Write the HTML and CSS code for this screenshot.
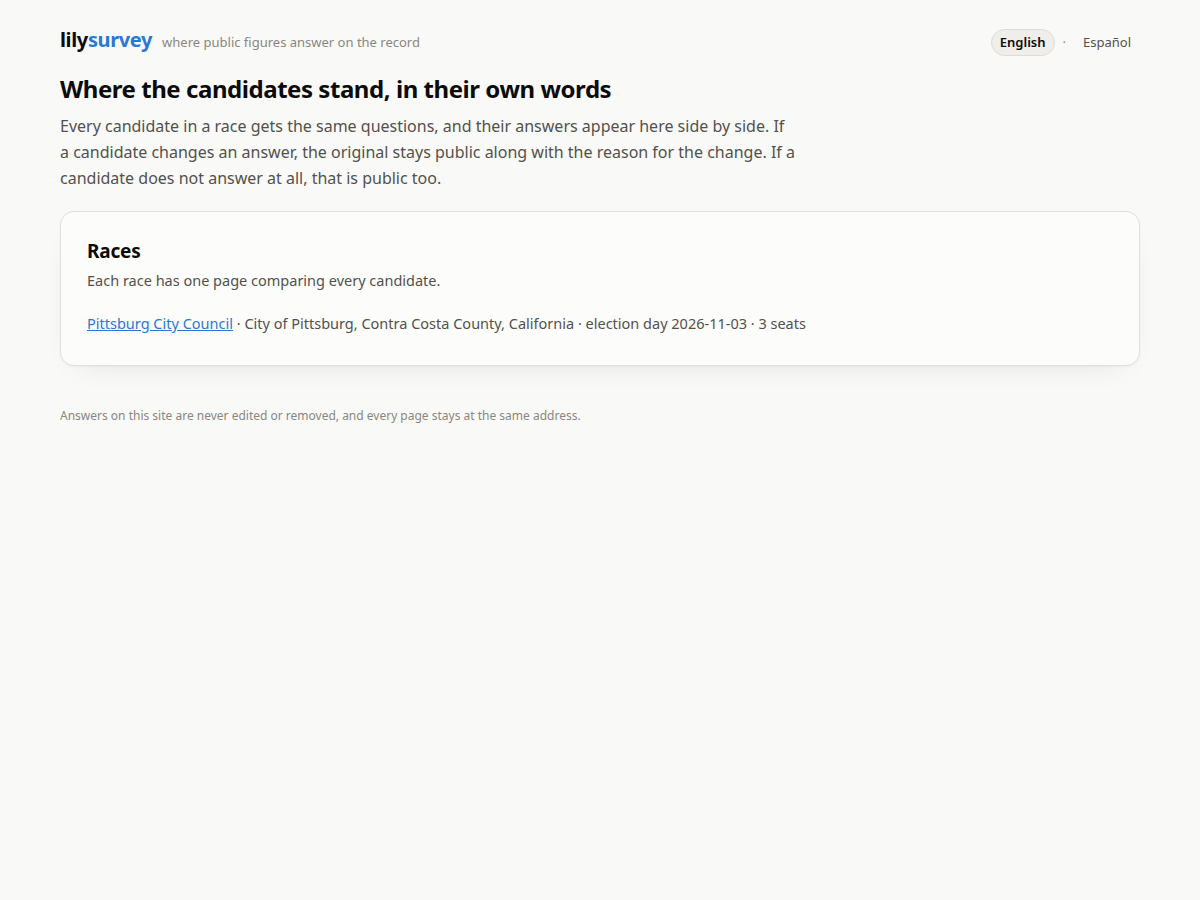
FILE: index.html
```html
<!DOCTYPE html>
<html lang="en">
<head>
    <meta charset="UTF-8">
    <meta name="viewport" content="width=device-width, initial-scale=1.0">
    <title>lilysurvey</title>
    <link rel="stylesheet" href="styles.css">
</head>
<body>
    <div class="wrap">
        <header class="top">
            <div class="brand">
                <a class="logo" href="#">lily<span>survey</span></a>
                <span class="tagline">where public figures answer on the record</span>
            </div>
            <nav class="lang">
                <a class="on" href="#">English</a>
                <span class="dot">·</span>
                <a href="#">Español</a>
            </nav>
        </header>

        <h1>Where the candidates stand, in their own words</h1>
        <p class="lede">Every candidate in a race gets the same questions, and their answers appear here side by side. If a candidate changes an answer, the original stays public along with the reason for the change. If a candidate does not answer at all, that is public too.</p>

        <section class="card">
            <h2>Races</h2>
            <p class="sub">Each race has one page comparing every candidate.</p>
            <p class="race"><a href="#">Pittsburg City Council</a> · City of Pittsburg, Contra Costa County, California · election day 2026-11-03 · 3 seats</p>
        </section>

        <footer>Answers on this site are never edited or removed, and every page stays at the same address.</footer>
    </div>
</body>
</html>
```
FILE: styles.css
```css
* {
    box-sizing: border-box;
}
body {
    margin: 0;
    background: #f9f9f7;
    color: #0b0b0b;
    font-family: "Noto Sans", sans-serif;
    font-size: 16px;
    line-height: 1.6;
}
h1, h2, p {
    margin: 0;
}
.wrap {
    width: 1080px;
    margin: 0 auto;
    padding-top: 24px;
}

/* header */
.top {
    display: flex;
    justify-content: space-between;
    align-items: baseline;
}
.brand {
    display: flex;
    align-items: baseline;
    gap: 10px;
}
.logo {
    font-size: 20px;
    font-weight: 700;
    letter-spacing: -0.36px;
    color: #0b0b0b;
    text-decoration: none;
}
.logo span {
    color: #2a78d6;
}
.tagline {
    font-size: 13px;
    color: #898781;
}
.lang {
    display: flex;
    align-items: baseline;
    font-size: 13px;
}
.lang a {
    padding: 2px 8px;
    border: 1px solid transparent;
    border-radius: 999px;
    color: #52514e;
    text-decoration: none;
}
.lang a.on {
    background: #f0eeeb;
    border-color: #dddcd8;
    color: #0b0b0b;
    font-weight: 600;
}
.dot {
    margin: 0 8px;
    color: #898781;
}

h1 {
    margin-top: 17px;
    font-size: 24px;
    font-weight: 700;
    line-height: 31px;
    letter-spacing: -0.45px;
}
.lede {
    max-width: 736px;
    margin-top: 9px;
    line-height: 26px;
    color: #52514e;
}

/* races */
.card {
    height: 155px;
    margin-top: 20px;
    padding: 24px 26px;
    background: #fcfcfb;
    border: 1px solid #e1e0dc;
    border-radius: 14px;
    box-shadow: 0 1px 2px rgba(11,11,11,0.04), 0 12px 32px -20px rgba(11,11,11,0.14);
}
h2 {
    font-size: 19px;
    font-weight: 700;
    line-height: 30px;
    letter-spacing: -0.01em;
}
.sub, .race {
    font-size: 14.5px;
    line-height: 23px;
    color: #52514e;
}
.sub {
    margin-top: 3px;
}
.race {
    margin-top: 20px;
}
.race a {
    color: #2a78d6;
}

footer {
    margin-top: 40px;
    font-size: 12px;
    color: #898781;
}
```
